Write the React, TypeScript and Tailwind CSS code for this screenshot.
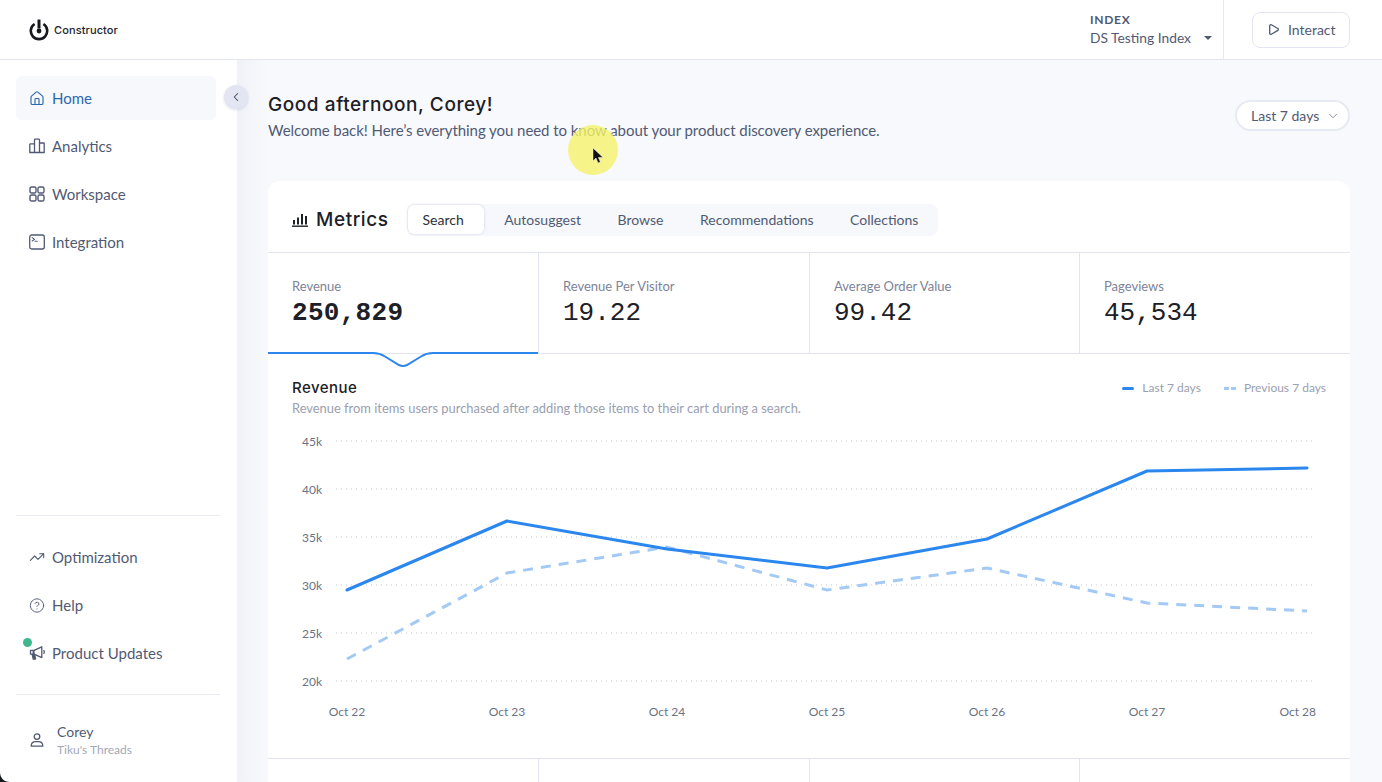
import { CircleHelp, House, ChevronDown, ChevronLeft, Play, TrendingUp } from "lucide-react";

const gridRows = [
  { label: "45k", y: 441 },
  { label: "40k", y: 489 },
  { label: "35k", y: 537 },
  { label: "30k", y: 585 },
  { label: "25k", y: 633 },
  { label: "20k", y: 681 },
];

const dates = ["Oct 22", "Oct 23", "Oct 24", "Oct 25", "Oct 26", "Oct 27", "Oct 28"];
const current = "347,590 507,521 667,549 827,568 987,539 1147,471 1307,468";
const previous = "347,659 507,573 667,547 827,590 987,568 1147,603 1307,611";

const tabs = ["Search", "Autosuggest", "Browse", "Recommendations", "Collections"];

const metrics = [
  { label: "Revenue", value: "250,829", active: true },
  { label: "Revenue Per Visitor", value: "19.22" },
  { label: "Average Order Value", value: "99.42" },
  { label: "Pageviews", value: "45,534" },
];

const AnalyticsIcon = () => (
  <svg width="16" height="16" viewBox="0 0 16 16" fill="none" stroke="currentColor" strokeWidth="1.3">
    <path d="M.8 14.5V6.5a.6.6 0 0 1 .6-.6H5.5V14.5ZM5.5 14.5V2a.8.8 0 0 1 .8-.8h3.4a.8.8 0 0 1 .8.8v12.5ZM10.5 14.5V5h4.1a.6.6 0 0 1 .6.6v8.9ZM.8 14.5h14.4" strokeLinejoin="round" />
  </svg>
);

const WorkspaceIcon = () => (
  <svg width="16" height="16" viewBox="0 0 16 16" fill="none" stroke="currentColor" strokeWidth="1.4">
    <rect x="1" y="1" width="6" height="6" rx="1.6" />
    <rect x="9" y="1" width="6" height="6" rx="1.6" />
    <rect x="1" y="9" width="6" height="6" rx="1.6" />
    <rect x="9" y="9" width="6" height="6" rx="1.6" />
  </svg>
);

const TerminalIcon = () => (
  <svg width="16" height="16" viewBox="0 0 16 16" fill="none" stroke="currentColor" strokeWidth="1.3">
    <rect x=".7" y="1" width="14.6" height="14" rx="2" />
    <path d="M3.2 3.6 5.6 5.4 3.2 7M6 7.2h2.2" strokeLinecap="round" strokeLinejoin="round" strokeWidth="1.1" />
  </svg>
);

const MegaphoneIcon = () => (
  <svg width="16" height="16" viewBox="0 0 16 16" fill="none" stroke="currentColor" strokeWidth="1.3" strokeLinejoin="round">
    <path d="M1.5 5.4h3.6L12.8 1.8v10.8L5.1 9.2H1.5Z" />
    <path d="M4.6 5.4v3.8" strokeWidth="2" />
    <path d="M3.2 9.4h2.6l.7 4.6H4.2Z" fill="currentColor" />
    <path d="M14.6 5.2c.7.9.7 2.6 0 3.6" />
  </svg>
);

const UserIcon = () => (
  <svg width="16" height="16" viewBox="0 0 16 16" fill="none" stroke="currentColor" strokeWidth="1.3">
    <circle cx="8" cy="4.6" r="2.8" />
    <path d="M2.2 14.2c0-3 2-4.4 3.6-4.6h4.4c1.6.2 3.6 1.6 3.6 4.6Z" strokeLinejoin="round" />
  </svg>
);

const BarsIcon = () => (
  <svg width="16" height="14" viewBox="0 0 16 14" fill="currentColor">
    <rect x="1" y="7" width="2" height="4.5" />
    <rect x="5" y="4.5" width="2" height="7" />
    <rect x="9" y="1" width="2" height="10.5" />
    <rect x="13" y="3" width="2" height="8.5" />
    <rect x="0" y="12.5" width="16" height="1.4" />
  </svg>
);

const Logo = () => (
  <svg width="20" height="22" viewBox="0 0 20 22" fill="none" stroke="#16181d">
    <path d="M5.6 5a8.2 8.2 0 1 0 8.8 0" strokeWidth="2.6" />
    <path d="M10 .5v9" strokeWidth="3" />
    <circle cx="10" cy="12" r="2.4" fill="#16181d" strokeWidth="0" />
  </svg>
);

const NavItem = ({ icon, label, active, dot }: { icon: React.ReactNode; label: string; active?: boolean; dot?: boolean }) => (
  <div className={`relative flex h-11 items-center gap-[7px] rounded-md px-[13px] text-[15px] ${active ? "bg-[#f6f8fc] text-[#2b68ad]" : "text-[#515a74]"}`}>
    <span className="flex w-4 justify-center">{icon}</span>
    <span>{label}</span>
    {dot && <span className="absolute left-[7px] top-[7px] h-[9px] w-[9px] rounded-full bg-[#3fb68b]" />}
  </div>
);

export default function App() {
  return (
    <div className="relative flex h-[782px] w-[1382px] flex-col overflow-hidden bg-white font-['Lato',sans-serif] text-[#515a74]">
      {/* Top bar */}
      <header className="flex h-[60px] shrink-0 items-center border-b border-[#e2e5ef] bg-white">
        <div className="flex items-center gap-[5px] pl-[29px]">
          <Logo />
          <span className="mt-[2px] font-['Inter',sans-serif] text-[11px] font-medium tracking-[0.01em] text-[#22252c]">Constructor</span>
        </div>
        <div className="ml-auto flex h-full w-[134px] flex-col justify-center border-r border-[#e6e8ee]">
          <span className="text-[12px] font-bold leading-[16px] tracking-[0.06em] text-[#515a74]">INDEX</span>
          <div className="flex items-center justify-between pr-[11px] text-[13.8px] leading-[20px]">
            <span>DS Testing Index</span>
            <span className="h-0 w-0 border-x-[4px] border-t-[4px] border-x-transparent border-t-[#515a74]" />
          </div>
        </div>
        <div className="ml-[28px] mr-[32px] flex h-[36px] w-[98px] items-center gap-[8px] rounded-lg border border-[#e3e6f2] pl-[14px] text-[14px]">
          <Play size={13} strokeWidth={2.4} />
          <span>Interact</span>
        </div>
      </header>

      <div className="flex min-h-0 flex-1">
        {/* Sidebar */}
        <aside className="flex w-[237px] shrink-0 flex-col justify-between bg-white pl-4 pr-[17px]">
          <nav className="flex w-[200px] flex-col gap-1 pt-4">
            <NavItem icon={<House size={17} strokeWidth={1.7} />} label="Home" active />
            <NavItem icon={<AnalyticsIcon />} label="Analytics" />
            <NavItem icon={<WorkspaceIcon />} label="Workspace" />
            <NavItem icon={<TerminalIcon />} label="Integration" />
          </nav>
          <div>
            <div className="flex flex-col gap-1 border-b border-t border-[#e8eaf0] py-[19px]">
              <NavItem icon={<TrendingUp size={16} strokeWidth={1.6} />} label="Optimization" />
              <NavItem icon={<CircleHelp size={17} strokeWidth={1.4} />} label="Help" />
              <NavItem icon={<MegaphoneIcon />} label="Product Updates" dot />
            </div>
            <div className="flex h-[87px] items-center gap-[12px] pl-[13px] pt-[2px]">
              <UserIcon />
              <div className="flex flex-col">
                <span className="text-[14px] leading-[20px]">Corey</span>
                <span className="mt-px text-[12px] leading-[14px] text-[#a3a9b8]">Tiku's Threads</span>
              </div>
            </div>
          </div>
        </aside>

        {/* Main */}
        <main className="flex min-w-0 flex-1 flex-col bg-[linear-gradient(90deg,#f0f2f8_0,#f7f9fc_31px)] pl-[31px] pr-[32px]">
          <div className="flex h-[121px] shrink-0 items-start justify-between pt-[31px]">
            <div>
              <h1 className="font-['Inter',sans-serif] text-[19px] font-medium leading-[28px] tracking-[0.03em] text-[#1d2027]">Good afternoon, Corey!</h1>
              <p className="text-[15px] leading-[22px] tracking-[-0.055px] text-[#515a74]">Welcome back! Here’s everything you need to know about your product discovery experience.</p>
            </div>
            <div className="mt-[9px] flex h-[31px] w-[115px] items-center gap-[7px] rounded-full border-2 border-[#e6ebf3] bg-white pl-[14px] text-[14px]">
              <span>Last 7 days</span>
              <ChevronDown size={14} strokeWidth={1.4} className="text-[#6f7689]" />
            </div>
          </div>

          <section className="flex-1 rounded-t-xl bg-white">
            <div className="flex h-[72px] items-center border-b border-[#e2e5f1] pl-[24px] pt-[7px]">
              <span className="text-[#1d2027]"><BarsIcon /></span>
              <span className="ml-[8px] mt-px font-['Inter',sans-serif] text-[19px] font-medium tracking-[0.03em] text-[#1d2027]">Metrics</span>
              <div className="ml-[18px] flex h-[32px] w-[531px] items-center gap-[4.5px] rounded-lg bg-[#f6f8fb] pb-px pl-px text-[14px]">
                {tabs.map((tab, i) => (
                  <span
                    key={tab}
                    className={i === 0
                      ? "flex h-[29px] items-center rounded-md bg-white pl-[15px] pr-[20px] text-[#2b2f3a] shadow-[0_0_3px_rgba(90,100,140,0.25)]"
                      : "px-4"}
                  >
                    {tab}
                  </span>
                ))}
              </div>
            </div>

            <div className="relative grid h-[101px] grid-cols-[271px_271px_270px_270px] border-b border-[#e2e5f1]">
              {metrics.map((m, i) => (
                <div key={m.label} className={`pl-[24px] pt-[24px] ${i < 3 ? "border-r border-[#e2e5f1]" : ""}`}>
                  <div className="text-[13px] leading-[18px] text-[#7c8398]">{m.label}</div>
                  <div className={`mt-[2px] font-['Liberation_Mono',monospace] text-[26px] leading-[32px] text-[#1d2027] ${m.active ? "font-bold tracking-[0.3px]" : "font-normal"}`}>{m.value}</div>
                </div>
              ))}
              <svg className="absolute left-0 top-[98px]" width="271" height="20" viewBox="0 0 271 20" fill="none">
                <path d="M0 2H105C111 2 113 3 117 5.5L131 14C134 15.5 136 15.5 139 14L153 5.5C157 3 159 2 165 2H270" stroke="#2b87ee" strokeWidth="2" />
              </svg>
            </div>

            <div className="flex h-[405px] flex-col border-b border-[#e2e5f1]">
              <div className="flex items-start justify-between px-[24px] pt-[24px]">
                <div>
                  <div className="font-['Inter',sans-serif] text-[15px] font-medium leading-[20px] tracking-[0.03em] text-[#1d2027]">Revenue</div>
                  <div className="mt-[2px] text-[12.9px] leading-[17px] text-[#9aa0b0]">Revenue from items users purchased after adding those items to their cart during a search.</div>
                </div>
                <div className="flex items-center gap-[23px] text-[12px] leading-[20px] text-[#9aa0b0]">
                  <span className="flex items-center gap-2">
                    <span className="h-[3px] w-[12px] rounded-full bg-[#2b87ee]" />
                    Last 7 days
                  </span>
                  <span className="flex items-center gap-2">
                    <span className="h-[3px] w-[5px] bg-[#a3c9f5]" />
                    <span className="-ml-[6px] h-[3px] w-[5px] bg-[#a3c9f5]" />
                    Previous 7 days
                  </span>
                </div>
              </div>
              <svg className="mt-[13px]" width="1082" height="300" viewBox="268 430 1082 300" fontFamily="Lato, sans-serif" fontSize="12" fill="#6b7285">
                {gridRows.map((row) => (
                  <g key={row.label}>
                    <line x1="336" x2="1316" y1={row.y} y2={row.y} stroke="#c4c7cf" strokeWidth="1" strokeDasharray="1 4" />
                    <text x="322" y={row.y + 5} textAnchor="end">{row.label}</text>
                  </g>
                ))}
                {dates.map((d, i) => (
                  <text key={d} x={i === 6 ? 1316 : 347 + i * 160} y="716" textAnchor={i === 6 ? "end" : "middle"}>{d}</text>
                ))}
                <polyline points={previous} fill="none" stroke="#a3c9f5" strokeWidth="3" strokeDasharray="10 8" />
                <polyline points={current} fill="none" stroke="#2b87ee" strokeWidth="3" strokeLinejoin="round" strokeLinecap="round" />
              </svg>
            </div>

            <div className="grid grid-cols-[271px_271px_270px_270px]">
              <div className="h-6 border-r border-[#e2e5f1]" />
              <div className="h-6 border-r border-[#e2e5f1]" />
              <div className="h-6 border-r border-[#e2e5f1]" />
              <div className="h-6" />
            </div>
          </section>
        </main>
      </div>

      {/* Sidebar collapse toggle */}
      <div className="absolute left-[224px] top-[85px] flex h-6 w-6 items-center justify-center rounded-full bg-[#e3e6f2] text-[#3f4760] shadow-[0_1px_3px_rgba(90,100,140,0.2)]">
        <ChevronLeft size={14} strokeWidth={1.8} />
      </div>

      {/* Cursor highlight */}
      <div className="absolute left-[568px] top-[125px] h-[50px] w-[50px] rounded-full bg-[#f5f26a]/80" />
      <svg className="absolute left-[592px] top-[148px]" width="12" height="17" viewBox="0 0 12 17" fill="#111">
        <path d="M1 0v13l3-3 2 5 2.4-1-2-4.6H11Z" stroke="#fff" strokeWidth="0.5" />
      </svg>

      {/* Window corner */}
      <svg className="absolute bottom-0 left-0" width="10" height="10" viewBox="0 0 10 10" fill="#16181d">
        <path d="M0 0C0 6 4 10 10 10H0Z" />
      </svg>
    </div>
  );
}
